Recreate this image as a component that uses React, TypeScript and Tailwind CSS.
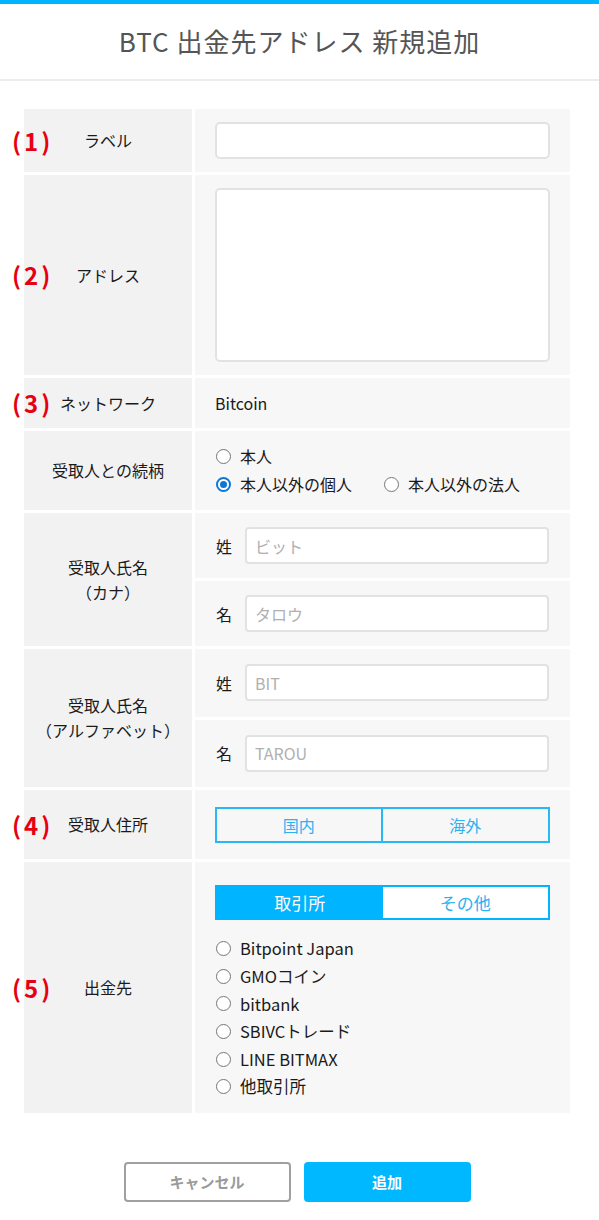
const font = { fontFamily: '"Noto Sans CJK JP", "Noto Sans", sans-serif' };

const Badge = ({ n }: { n: number }) => (
	<span className="absolute left-[-12px] top-1/2 flex -translate-y-1/2 gap-[3px] text-[24px] font-bold leading-none text-[#e60012]">
		<span>(</span>
		<span>{n}</span>
		<span>)</span>
	</span>
);

const Radio = ({ checked = false }: { checked?: boolean }) =>
	checked ? (
		<span className="flex h-[15px] w-[15px] shrink-0 items-center justify-center rounded-full border-2 border-[#0b78d7] bg-white">
			<span className="h-[7px] w-[7px] rounded-full bg-[#0b78d7]" />
		</span>
	) : (
		<span className="h-[15px] w-[15px] shrink-0 rounded-full border border-[#767676] bg-white" />
	);

const LabelCell = ({ children, n }: { children: React.ReactNode; n?: number }) => (
	<div className="relative flex items-center justify-center bg-[#f2f2f2] text-center text-[16px] leading-[25px] text-[#1a1a1a]">
		{n && <Badge n={n} />}
		<div>{children}</div>
	</div>
);

const NameInput = ({ label, placeholder }: { label: string; placeholder: string }) => (
	<div className="flex flex-1 items-center bg-[#f7f7f7] pl-[21px] pr-[21px]">
		<span className="w-[29px] text-[16px] text-[#1a1a1a]">{label}</span>
		<div className="flex h-[37px] flex-1 items-center rounded-[4px] border-2 border-[#e2e2e2] bg-white px-[8px] text-[16px] text-[#b0b0b0]">
			{placeholder}
		</div>
	</div>
);

const exchanges = ['Bitpoint Japan', 'GMOコイン', 'bitbank', 'SBIVCトレード', 'LINE BITMAX', '他取引所'];

export default function App() {
	return (
		<div className="min-h-[1220px] w-[599px] bg-white" style={font}>
			<div className="h-[4px] bg-[#00b4ff]" />
			<div className="flex h-[77px] items-center justify-center border-b-2 border-[#ececec] pb-[2px] text-[26px] tracking-[1px] text-[#555]">
				BTC 出金先アドレス 新規追加
			</div>

			<div className="ml-[24px] mt-[28px] grid w-[546px] grid-cols-[168px_1fr] gap-[3px]">
				{/* label */}
				<LabelCell n={1}>ラベル</LabelCell>
				<div className="flex h-[63px] items-center bg-[#f7f7f7] px-[20px]">
					<div className="h-[37px] w-[335px] rounded-[5px] border-2 border-[#e2e2e2] bg-white" />
				</div>

				{/* address */}
				<LabelCell n={2}>アドレス</LabelCell>
				<div className="flex h-[200px] items-center bg-[#f7f7f7] px-[20px]">
					<div className="h-[174px] w-[335px] rounded-[5px] border-2 border-[#e2e2e2] bg-white" />
				</div>

				{/* network */}
				<LabelCell n={3}>ネットワーク</LabelCell>
				<div className="flex h-[50px] items-center bg-[#f7f7f7] px-[20px] text-[16px] text-[#1a1a1a]">
					Bitcoin
				</div>

				{/* relation */}
				<LabelCell>受取人との続柄</LabelCell>
				<div className="flex h-[79px] flex-col justify-center gap-[7px] bg-[#f7f7f7] px-[21px] text-[16px] text-[#1a1a1a]">
					<label className="flex items-center gap-[9px] leading-[21px]">
						<Radio />
						本人
					</label>
					<div className="flex items-center leading-[21px]">
						<label className="flex w-[168px] items-center gap-[9px]">
							<Radio checked />
							本人以外の個人
						</label>
						<label className="flex items-center gap-[9px]">
							<Radio />
							本人以外の法人
						</label>
					</div>
				</div>

				{/* kana name */}
				<LabelCell>
					受取人氏名
					<br />
					（カナ）
				</LabelCell>
				<div className="flex h-[133px] flex-col gap-[3px]">
					<NameInput label="姓" placeholder="ビット" />
					<NameInput label="名" placeholder="タロウ" />
				</div>

				{/* alphabet name */}
				<LabelCell>
					受取人氏名
					<br />
					（アルファベット）
				</LabelCell>
				<div className="flex h-[138px] flex-col gap-[3px]">
					<NameInput label="姓" placeholder="BIT" />
					<NameInput label="名" placeholder="TAROU" />
				</div>

				{/* recipient address */}
				<LabelCell n={4}>受取人住所</LabelCell>
				<div className="flex h-[69px] items-center bg-[#f7f7f7] px-[20px]">
					<div className="grid h-[36px] w-[335px] grid-cols-2 border-2 border-[#2ab8f5] text-[16px] text-[#2ab2f2]">
						<div className="flex items-center justify-center border-r-2 border-[#2ab8f5]">国内</div>
						<div className="flex items-center justify-center">海外</div>
					</div>
				</div>

				{/* destination */}
				<LabelCell n={5}>出金先</LabelCell>
				<div className="flex h-[251px] flex-col bg-[#f7f7f7] px-[20px] pt-[23px]">
					<div className="grid h-[35px] w-[335px] grid-cols-2 border-2 border-[#00b4ff] text-[17px]">
						<div className="flex items-center justify-center bg-[#00b4ff] text-white">取引所</div>
						<div className="flex items-center justify-center bg-white text-[#2ab2f2]">その他</div>
					</div>
					<div className="mt-[15px] flex flex-col">
						{exchanges.map((name) => (
							<label
								key={name}
								className="flex h-[27.6px] items-center gap-[9px] pl-[1px] text-[16.5px] text-[#1a1a1a]">
								<Radio />
								{name}
							</label>
						))}
					</div>
				</div>
			</div>

			<div className="mt-[49px] flex justify-center gap-[13px] pr-[5px]">
				<button className="h-[40px] w-[167px] rounded-[4px] border-2 border-[#a0a0a0] bg-white text-[15px] font-bold text-[#9a9a9a]">
					キャンセル
				</button>
				<button className="h-[40px] w-[167px] rounded-[4px] bg-[#00b8ff] text-[15px] font-bold text-white">
					追加
				</button>
			</div>
		</div>
	);
}
